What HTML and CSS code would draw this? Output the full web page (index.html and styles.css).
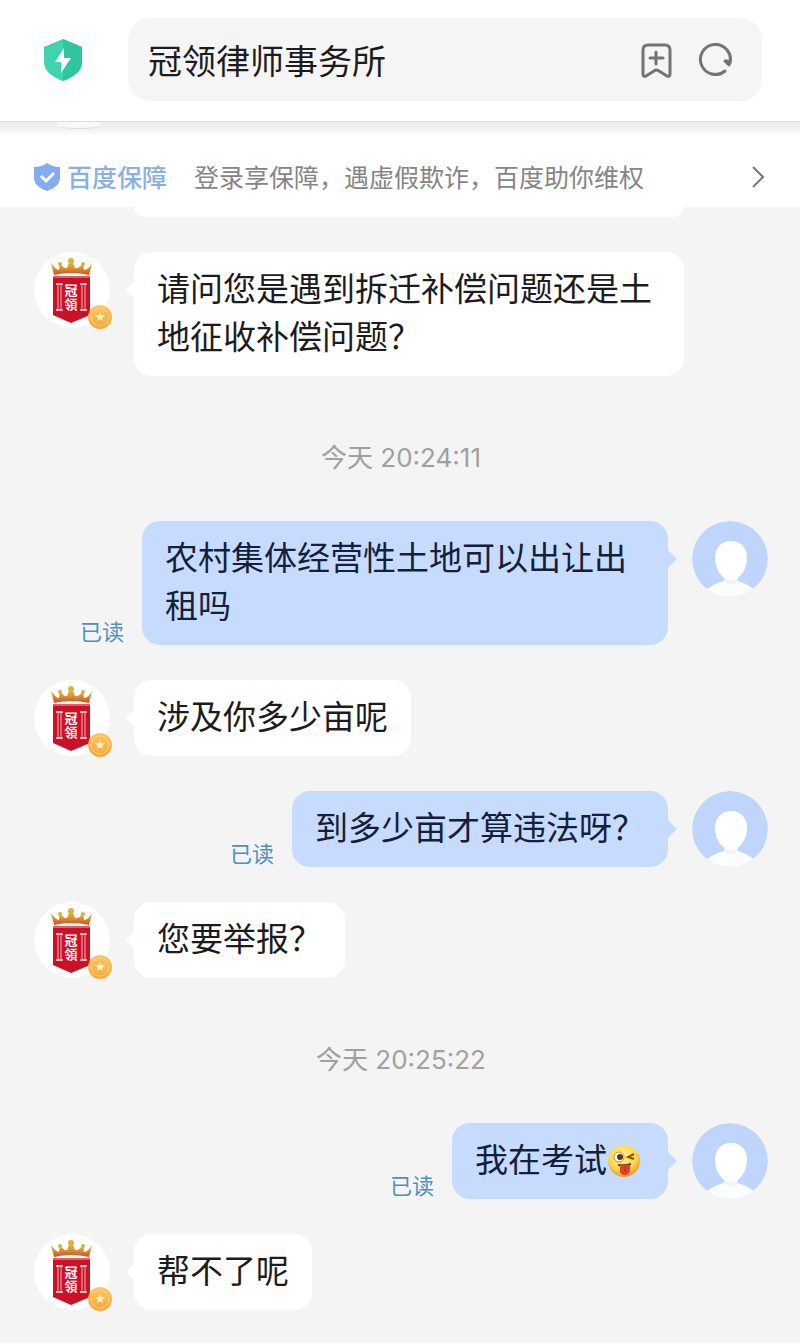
FILE: index.html
```html
<!DOCTYPE html>
<html lang="zh-CN">
<head>
    <meta charset="UTF-8">
    <meta name="viewport" content="width=device-width, initial-scale=1.0">
    <title>冠领律师事务所</title>
    <link rel="stylesheet" href="styles.css">
</head>
<body>

    <!-- Shared drawings -->
    <svg class="sprite" aria-hidden="true">
        <defs>
            <linearGradient id="crown-fill" x1="0" y1="0" x2="0" y2="1">
                <stop offset="0" stop-color="#d9b93a"/>
                <stop offset="0.5" stop-color="#dfa030"/>
                <stop offset="1" stop-color="#cf4f2c"/>
            </linearGradient>
            <linearGradient id="coin-fill" x1="0" y1="0" x2="0" y2="1">
                <stop offset="0" stop-color="#fcc665"/>
                <stop offset="1" stop-color="#f5a83a"/>
            </linearGradient>
            <radialGradient id="face-fill" cx="0.45" cy="0.35" r="0.65">
                <stop offset="0" stop-color="#fff08a"/>
                <stop offset="0.65" stop-color="#fbd84f"/>
                <stop offset="1" stop-color="#e79a2a"/>
            </radialGradient>
            <clipPath id="avatar-clip"><circle cx="38" cy="38" r="38"/></clipPath>
        </defs>
        <symbol id="firm" viewBox="0 0 80 80">
            <circle cx="38" cy="38" r="38" fill="#fff"/>
            <path d="M20 23L17 11Q22 18 25 18L26 10Q29 17 33 16L37 6L41 16Q46 17 49 10L50 18Q54 18 58 11L55 23Q37 19 20 23Z" fill="url(#crown-fill)"/>
            <circle cx="37" cy="9" r="3" fill="#d8b63c"/>
            <circle cx="26" cy="12" r="2" fill="#c9b945"/>
            <circle cx="49" cy="12" r="2" fill="#c9b945"/>
            <path d="M19 24H56V63L37 71L19 63Z" fill="#cb1027"/>
            <path d="M19 25H56" stroke="#f0b0a0" stroke-width="1"/>
            <path d="M22 32H29M22 58H29M46 32H53M46 58H53" stroke="#f3b7b7" stroke-width="2"/>
            <path d="M24 32V58M27 32V58M48 32V58M51 32V58" stroke="#f3b7b7" stroke-width="1"/>
            <circle cx="66" cy="65" r="12" fill="url(#coin-fill)"/>
            <circle cx="66" cy="65" r="9" fill="none" stroke="#fbd47f" stroke-width="1"/>
            <path d="M66 60L67 63L71 63L68 66L69 69L66 67L63 69L64 66L61 63L65 63Z" fill="#fff0c4"/>
        </symbol>
        <symbol id="user" viewBox="0 0 76 76">
            <g clip-path="url(#avatar-clip)">
                <circle cx="38" cy="38" r="38" fill="#bfd5fc"/>
                <path d="M11 71C20 64 27 61 32 60H45C50 61 57 64 66 71V76H11Z" fill="#fcfdff"/>
                <path d="M32 54H46V60Q39 67 32 60Z" fill="#eef4fe"/>
                <path d="M39 20C49 20 55 27 55 37C55 48 48 59 39 59C30 59 23 48 23 37C23 27 29 20 39 20Z" fill="#fff"/>
            </g>
        </symbol>
    </svg>

    <!-- Header -->
    <header class="header">
        <svg class="safe-icon" viewBox="0 0 40 44" role="img" aria-label="安全">
            <path d="M20 1L39 9V24C39 33 31 39 20 43C9 39 1 33 1 24V9Z" fill="#40d3b0"/>
            <path d="M20 1L39 9V24C39 33 31 39 20 43Z" fill="#2fc5a1"/>
            <path d="M21 10L12 24H18V35L28 20H21Z" fill="#fff"/>
        </svg>
        <form class="address-bar">
            <input class="address-input" type="text" value="冠领律师事务所" aria-label="地址">
            <button class="icon-btn" type="button" aria-label="添加书签">
                <svg viewBox="0 0 34 36">
                    <path d="M3 8Q3 3 8 3H25Q30 3 30 8V32Q30 35 27 34L19 29Q16 27 14 29L6 34Q3 35 3 32Z"/>
                    <path d="M16 10V22M10 16H23"/>
                </svg>
            </button>
            <button class="icon-btn" type="button" aria-label="刷新">
                <svg viewBox="0 0 34 36">
                    <path d="M27 29A15 15 0 1 1 32 21"/>
                    <path class="arrow-head" d="M27 19L32 19L31 23Z"/>
                </svg>
            </button>
        </form>
    </header>

    <!-- Protection notice -->
    <a class="notice" href="#">
        <svg class="notice-icon" viewBox="0 0 26 28" aria-hidden="true">
            <path d="M13 0Q18 4 26 4V16Q25 24 13 28Q1 24 0 16V4Q8 4 13 0Z" fill="#82adf2"/>
            <path d="M7 13L12 18L20 10" fill="none" stroke="#fff" stroke-width="3"/>
        </svg>
        <strong class="notice-brand">百度保障</strong>
        <span class="notice-text">登录享保障，遇虚假欺诈，百度助你维权</span>
        <svg class="chevron" viewBox="0 0 12 22" aria-hidden="true">
            <path d="M1 1L11 11L1 21" fill="none" stroke="#777" stroke-width="2"/>
        </svg>
    </a>

    <!-- Chat -->
    <main class="chat">
        <div class="previous-bubble"></div>

        <div class="message">
            <div class="avatar firm-avatar">
                <svg aria-hidden="true"><use href="#firm"/></svg>
                <span class="firm-name">冠領</span>
            </div>
            <p class="bubble">请问您是遇到拆迁补偿问题还是土地征收补偿问题？</p>
        </div>

        <time class="time">今天 20:24:11</time>

        <div class="message mine">
            <span class="read">已读</span>
            <p class="bubble">农村集体经营性土地可以出让出租吗</p>
            <svg class="avatar" role="img" aria-label="我"><use href="#user"/></svg>
        </div>

        <div class="message">
            <div class="avatar firm-avatar">
                <svg aria-hidden="true"><use href="#firm"/></svg>
                <span class="firm-name">冠領</span>
            </div>
            <p class="bubble">涉及你多少亩呢</p>
        </div>

        <div class="message mine">
            <span class="read">已读</span>
            <p class="bubble">到多少亩才算违法呀？</p>
            <svg class="avatar" role="img" aria-label="我"><use href="#user"/></svg>
        </div>

        <div class="message">
            <div class="avatar firm-avatar">
                <svg aria-hidden="true"><use href="#firm"/></svg>
                <span class="firm-name">冠領</span>
            </div>
            <p class="bubble">您要举报？</p>
        </div>

        <time class="time">今天 20:25:22</time>

        <div class="message mine">
            <span class="read">已读</span>
            <p class="bubble">我在考试<svg class="emoji" viewBox="0 0 33 33" role="img" aria-label="吐舌">
                <circle cx="17" cy="17" r="16" fill="url(#face-fill)"/>
                <circle cx="12" cy="13" r="5" fill="#fff" stroke="#c98c2c" stroke-width="1"/>
                <circle cx="13" cy="13" r="3" fill="#5a3412"/>
                <path d="M27 10L21 13L27 15" fill="none" stroke="#8a5518" stroke-width="2"/>
                <path d="M11 21Q17 22 24 20" fill="none" stroke="#7a3a12" stroke-width="2"/>
                <path d="M13 21H23V27Q22 31 18 31Q13 31 13 27Z" fill="#e2402c"/>
                <path d="M18 22V28" stroke="#b32a1c" stroke-width="1"/>
            </svg></p>
            <svg class="avatar" role="img" aria-label="我"><use href="#user"/></svg>
        </div>

        <div class="message">
            <div class="avatar firm-avatar">
                <svg aria-hidden="true"><use href="#firm"/></svg>
                <span class="firm-name">冠領</span>
            </div>
            <p class="bubble">帮不了呢</p>
        </div>
    </main>

</body>
</html>
```
FILE: styles.css
```css
/* Basic Styles */
* {
    box-sizing: border-box;
}

body {
    font-family: "Noto Sans CJK SC", sans-serif;
    margin: 0;
    background-color: #fff;
    color: #1c1c1e;
}

.sprite {
    position: absolute;
    width: 0;
    height: 0;
}

/* Header Styles */
.header {
    display: flex;
    align-items: center;
    gap: 45px;
    padding: 18px 38px 20px 43px;
    border-bottom: 1px solid #dcdcdc;
}

.safe-icon {
    width: 40px;
    height: 44px;
    flex: none;
}

.address-bar {
    display: flex;
    flex: 1;
    align-items: center;
    gap: 24px;
    min-width: 0;
    padding: 16px 30px 16px 20px;
    border-radius: 22px;
    background-color: #f5f5f5;
}

.address-input {
    flex: 1;
    min-width: 0;
    height: 51px;
    padding: 0;
    border: none;
    background: none;
    font: inherit;
    font-size: 34px;
    color: #1c1c1e;
}

.icon-btn {
    width: 34px;
    height: 36px;
    padding: 0;
    border: none;
    background: none;
    cursor: pointer;
}

.icon-btn svg {
    display: block;
    width: 34px;
    height: 36px;
    fill: none;
    stroke: #747474;
    stroke-width: 3;
    stroke-linecap: round;
    stroke-linejoin: round;
}

.icon-btn .arrow-head {
    fill: #747474;
}

/* Protection Notice */
.notice {
    position: relative;
    display: flex;
    align-items: center;
    padding: 32px 36px 8px 34px;
    background-image: linear-gradient(#ececec 0, #f1f1f1 7px, #fff 14px);
    font-size: 25px;
    line-height: 45px;
    color: #858585;
    text-decoration: none;
}

/* Lower edge of an avatar under the header */
.notice::before {
    content: "";
    position: absolute;
    top: 0;
    left: 57px;
    width: 44px;
    height: 6px;
    border-bottom: 1px solid #dcdcdc;
    border-radius: 0 0 50% 50%;
    background-color: #f8f8f8;
}

.notice-icon {
    width: 26px;
    height: 28px;
    margin-right: 7px;
}

.notice-brand {
    margin-right: 27px;
    font-weight: 500;
    color: #8ab0e2;
}

.chevron {
    width: 12px;
    height: 22px;
    margin-left: auto;
}

/* Chat */
.chat {
    display: flex;
    flex-direction: column;
    gap: 35px;
    padding: 0 32px 33px 34px;
    background-color: #f4f4f4;
}

/* End of the message scrolled under the notice */
.previous-bubble {
    width: 550px;
    max-width: 100%;
    height: 10px;
    margin-left: 100px;
    border-radius: 0 0 20px 20px;
    background-color: #fff;
}

.message {
    display: flex;
    align-items: flex-start;
    gap: 24px;
    padding-right: 84px;
}

.message.mine {
    justify-content: flex-end;
    padding-left: 46px;
    padding-right: 0;
}

.avatar {
    width: 76px;
    height: 76px;
    flex: none;
}

.firm-avatar {
    position: relative;
}

.firm-avatar svg {
    display: block;
    width: 80px;
    height: 80px;
    margin: 0 -4px -4px 0;
}

/* Name lies over the red banner */
.firm-name {
    position: absolute;
    top: 31px;
    left: 30px;
    width: 14px;
    font-size: 13px;
    font-weight: 700;
    line-height: 14px;
    text-align: center;
    word-break: break-all;
    color: #fff;
}

.bubble {
    position: relative;
    margin: 0;
    padding: 11px 23px 17px;
    border-radius: 18px;
    background-color: #fff;
    font-size: 33px;
    line-height: 48px;
}

.mine .bubble {
    background-color: #c7dbff;
    color: #14203a;
}

/* Bubble tail */
.bubble::before {
    content: "";
    position: absolute;
    top: 29px;
    left: -8px;
    border: 9px solid transparent;
    border-left: none;
    border-right-color: #fff;
}

.mine .bubble::before {
    left: auto;
    right: -9px;
    border: 9px solid transparent;
    border-right: none;
    border-left-color: #c7dbff;
}

.read {
    align-self: flex-end;
    flex: none;
    margin-right: -6px;
    font-size: 22px;
    line-height: 30px;
    color: #5090c4;
}

.time {
    padding-top: 19px;
    font-family: Inter, "Noto Sans CJK SC", sans-serif;
    font-size: 26px;
    line-height: 56px;
    text-align: center;
    color: #a0a0a0;
}

.emoji {
    width: 33px;
    height: 33px;
    margin-right: 5px;
    vertical-align: -5px;
}
```
